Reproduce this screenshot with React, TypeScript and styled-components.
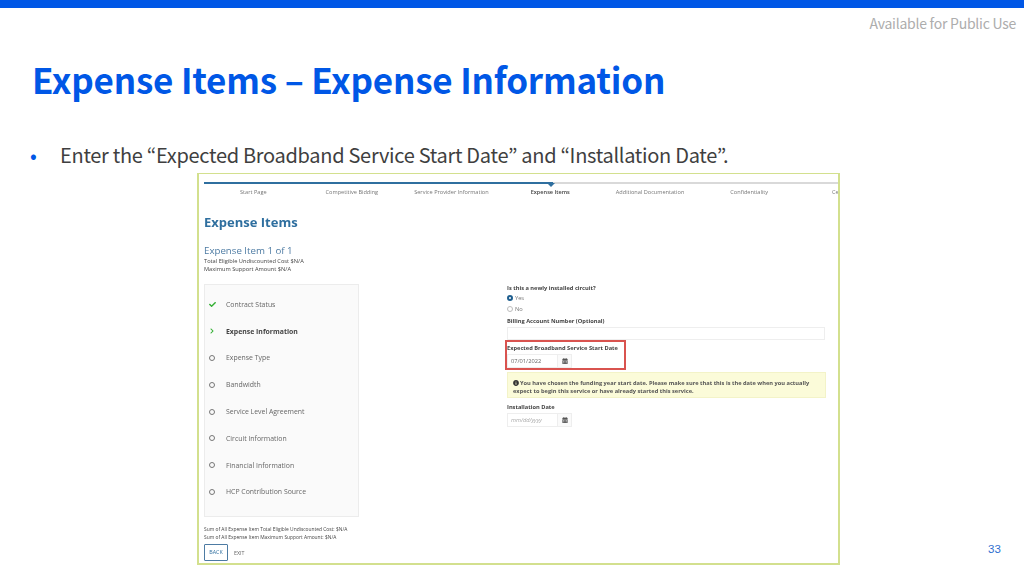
import React from 'react';
import styled, { createGlobalStyle } from 'styled-components';
import { FaCalendarAlt, FaCheck, FaChevronRight, FaInfoCircle } from 'react-icons/fa';

const GlobalStyle = createGlobalStyle`
  html, body { margin: 0; padding: 0; background: #fff; }
  * { box-sizing: border-box; }
`;

const steps = [
  { label: 'Start Page', offset: 36 },
  { label: 'Competitive Bidding', offset: 59 },
  { label: 'Service Provider Information', offset: 36 },
  { label: 'Expense Items', offset: 42, active: true },
  { label: 'Additional Documentation', offset: 46 },
  { label: 'Confidentiality', offset: 46 },
  { label: 'Ce', offset: 64 }
];

const sections = [
  { label: 'Contract Status', state: 'done' },
  { label: 'Expense Information', state: 'current' },
  { label: 'Expense Type', state: 'todo' },
  { label: 'Bandwidth', state: 'todo' },
  { label: 'Service Level Agreement', state: 'todo' },
  { label: 'Circuit Information', state: 'todo' },
  { label: 'Financial Information', state: 'todo' },
  { label: 'HCP Contribution Source', state: 'todo' }
];

function SectionIcon({ state }: { state: string }) {
  if (state === 'done') return <S.Done><FaCheck size={7} /></S.Done>;
  if (state === 'current') return <S.Current><FaChevronRight size={6} /></S.Current>;
  return <S.Todo />;
}

function DateInput({ value, placeholder }: { value?: string; placeholder?: boolean }) {
  return (
    <S.DateRow>
      <S.DateBox $placeholder={placeholder}>{value}</S.DateBox>
      <S.CalendarButton><FaCalendarAlt size={6} /></S.CalendarButton>
    </S.DateRow>
  );
}

export default function App() {
  return (
    <S.Page>
      <GlobalStyle />
      <S.TopBar />
      <S.Tag>Available for Public Use</S.Tag>
      <S.Title>Expense Items – Expense Information</S.Title>
      <S.Bullet>
        <S.Dot>•</S.Dot>
        <span>Enter the “Expected Broadband Service Start Date” and “Installation Date”.</span>
      </S.Bullet>
      <S.Lower>
        <S.Shot>
          <S.ShotInner>
            <S.Track>
              <S.TrackDone />
              <S.Caret />
            </S.Track>
            <S.Steps>
              {steps.map((step) => (
                <S.Step key={step.label} $offset={step.offset} $active={step.active}>{step.label}</S.Step>
              ))}
            </S.Steps>
            <S.Heading>Expense Items</S.Heading>
            <S.ItemTitle>Expense Item 1 of 1</S.ItemTitle>
            <S.Meta>Total Eligible Undiscounted Cost $N/A</S.Meta>
            <S.Meta>Maximum Support Amount $N/A</S.Meta>
            <S.Body>
              <S.SectionList>
                {sections.map((section) => (
                  <S.SectionRow key={section.label}>
                    <S.IconSlot><SectionIcon state={section.state} /></S.IconSlot>
                    <S.SectionLabel $current={section.state === 'current'}>{section.label}</S.SectionLabel>
                  </S.SectionRow>
                ))}
              </S.SectionList>
              <S.Form>
                <S.Label>Is this a newly installed circuit?</S.Label>
                <S.Radios>
                  <S.Radio><S.RadioMark $checked />Yes</S.Radio>
                  <S.Radio><S.RadioMark />No</S.Radio>
                </S.Radios>
                <S.BillingLabel>Billing Account Number (Optional)</S.BillingLabel>
                <S.TextBox />
                <S.Highlighted>
                  <S.Label>Expected Broadband Service Start Date</S.Label>
                  <DateInput value="07/01/2022" />
                  <S.RedBox />
                </S.Highlighted>
                <S.Alert>
                  <S.AlertIcon><FaInfoCircle size={6} /></S.AlertIcon>
                  You have chosen the funding year start date. Please make sure that this is the date when you actually expect to begin this service or have already started this service.
                </S.Alert>
                <S.InstallLabel>Installation Date</S.InstallLabel>
                <DateInput value="mm/dd/yyyy" placeholder />
              </S.Form>
            </S.Body>
            <S.TotalsBlock>
              <S.Totals>Sum of All Expense Item Total Eligible Undiscounted Cost: $N/A</S.Totals>
              <S.Totals>Sum of All Expense Item Maximum Support Amount: $N/A</S.Totals>
            </S.TotalsBlock>
            <S.Actions>
              <S.BackButton>BACK</S.BackButton>
              <S.ExitLink>EXIT</S.ExitLink>
            </S.Actions>
          </S.ShotInner>
        </S.Shot>
        <S.PageNumber>33</S.PageNumber>
      </S.Lower>
    </S.Page>
  );
}

const slideFont = `'Noto Sans CJK JP', 'Noto Sans', sans-serif`;
const shotFont = `'Open Sans', 'Noto Sans', sans-serif`;

const S = {
  Page: styled.div`
    width: 1024px;
    height: 576px;
    overflow: hidden;
    display: flex;
    flex-direction: column;
    background: #fff;
    font-family: ${slideFont};
  `,
  TopBar: styled.div`
    height: 8px;
    background: #0057e6;
  `,
  Tag: styled.div`
    margin-top: 5px;
    padding-right: 8px;
    height: 20px;
    line-height: 20px;
    text-align: right;
    font-size: 14px;
    letter-spacing: -0.25px;
    color: #adadad;
  `,
  Title: styled.h1`
    margin: 24px 0 0;
    padding-left: 32px;
    height: 44px;
    line-height: 44px;
    font-size: 35px;
    letter-spacing: -0.2px;
    font-weight: 700;
    color: #0057e6;
  `,
  Bullet: styled.div`
    margin-top: 40px;
    height: 28px;
    line-height: 28px;
    display: flex;
    font-size: 20px;
    letter-spacing: -0.3px;
    color: #3f3f3f;
  `,
  Dot: styled.span`
    width: 60px;
    padding-left: 30px;
    color: #0057e6;
  `,
  Lower: styled.div`
    margin-top: 4px;
    display: flex;
    align-items: flex-end;
    padding-left: 197px;
  `,
  Shot: styled.div`
    flex: none;
    width: 643px;
    height: 392px;
    border: 2px solid #d3e08e;
    border-top-width: 1px;
    overflow: hidden;
  `,
  ShotInner: styled.div`
    width: 641px;
    padding: 8px 0 0 5px;
    font-family: ${shotFont};
    color: #555;
    filter: blur(0.3px);
  `,
  Track: styled.div`
    position: relative;
    width: 636px;
    height: 2px;
    background: #d9d9d9;
  `,
  TrackDone: styled.div`
    width: 349px;
    height: 2px;
    background: #2f6f9f;
  `,
  Caret: styled.div`
    position: absolute;
    left: 343px;
    top: 1px;
    border-left: 4px solid transparent;
    border-right: 4px solid transparent;
    border-top: 4px solid #2f6f9f;
  `,
  Steps: styled.div`
    margin-top: 4px;
    height: 8px;
    display: flex;
    font-size: 5.6px;
    line-height: 8px;
    white-space: nowrap;
  `,
  Step: styled.div<{ $offset: number; $active?: boolean }>`
    flex: none;
    margin-left: ${({ $offset }) => $offset}px;
    font-weight: ${({ $active }) => ($active ? 600 : 400)};
    color: ${({ $active }) => ($active ? '#444' : '#777')};
  `,
  Heading: styled.h2`
    margin: 17px 0 0;
    height: 18px;
    line-height: 18px;
    font-size: 13px;
    font-weight: 700;
    color: #2f6f9f;
  `,
  ItemTitle: styled.div`
    margin-top: 13px;
    height: 14px;
    line-height: 14px;
    font-size: 9.7px;
    color: #4d7ba3;
  `,
  Meta: styled.div`
    height: 7.5px;
    line-height: 7.5px;
    font-size: 5.7px;
    color: #444;
  `,
  Body: styled.div`
    margin-top: 11px;
    display: flex;
    align-items: flex-start;
    gap: 148px;
  `,
  SectionList: styled.div`
    flex: none;
    width: 155px;
    height: 233px;
    padding-top: 6px;
    background: #fafafa;
    border: 1px solid #ececec;
    display: flex;
    flex-direction: column;
  `,
  SectionRow: styled.div`
    flex: none;
    height: 26.8px;
    display: flex;
    align-items: center;
    font-size: 6.9px;
    color: #666;
  `,
  IconSlot: styled.div`
    flex: none;
    width: 21px;
    padding-left: 4px;
    display: flex;
  `,
  SectionLabel: styled.span<{ $current?: boolean }>`
    font-weight: ${({ $current }) => ($current ? 700 : 400)};
    color: ${({ $current }) => ($current ? '#444' : '#666')};
  `,
  Done: styled.span`
    display: flex;
    color: #35b035;
  `,
  Current: styled.span`
    display: flex;
    color: #35b035;
  `,
  Todo: styled.span`
    width: 6px;
    height: 6px;
    border: 1px solid #777;
    border-radius: 50%;
  `,
  Form: styled.div`
    flex: none;
    width: 319px;
    font-size: 5.7px;
    color: #444;
  `,
  Label: styled.div`
    height: 8px;
    line-height: 8px;
    font-weight: 700;
    color: #444;
  `,
  Radios: styled.div`
    margin-top: 1px;
  `,
  Radio: styled.div`
    height: 10.5px;
    display: flex;
    align-items: center;
    gap: 2px;
    color: #777;
  `,
  RadioMark: styled.span<{ $checked?: boolean }>`
    width: 6px;
    height: 6px;
    border-radius: 50%;
    border: ${({ $checked }) => ($checked ? '2px solid #1f5f8f' : '1px solid #bbb')};
    background: #fff;
  `,
  BillingLabel: styled.div`
    margin-top: 3px;
    height: 8px;
    line-height: 8px;
    font-weight: 700;
    color: #444;
  `,
  TextBox: styled.div`
    margin-top: 2px;
    height: 13px;
    width: 318px;
    border: 1px solid #eee;
  `,
  Highlighted: styled.div`
    position: relative;
    margin-top: 4px;
    width: 119px;
  `,
  RedBox: styled.div`
    position: absolute;
    left: -2px;
    top: -4px;
    width: 121px;
    height: 30px;
    border: 2px solid #d9534f;
  `,
  DateRow: styled.div`
    margin-top: 2px;
    height: 14px;
    display: flex;
  `,
  DateBox: styled.div<{ $placeholder?: boolean }>`
    width: 51px;
    padding-left: 3px;
    line-height: 13px;
    border: 1px solid #eee;
    font-style: ${({ $placeholder }) => ($placeholder ? 'italic' : 'normal')};
    color: ${({ $placeholder }) => ($placeholder ? '#aaa' : '#666')};
  `,
  CalendarButton: styled.div`
    width: 14px;
    display: flex;
    align-items: center;
    justify-content: center;
    border: 1px solid #eee;
    border-left: none;
    background: #fafafa;
    color: #555;
  `,
  Alert: styled.div`
    margin-top: 4px;
    width: 319px;
    height: 26px;
    padding: 7px 5px 0;
    line-height: 7.7px;
    background: #fbfbd9;
    border: 1px solid #f3f3c8;
    font-weight: 700;
    color: #555;
  `,
  AlertIcon: styled.span`
    display: inline-flex;
    vertical-align: -1px;
    margin-right: 1px;
    color: #333;
  `,
  InstallLabel: styled.div`
    margin-top: 5px;
    height: 8px;
    line-height: 8px;
    font-weight: 700;
    color: #444;
  `,
  TotalsBlock: styled.div`
    margin-top: 8px;
  `,
  Totals: styled.div`
    height: 8px;
    line-height: 8px;
    font-size: 4.9px;
    color: #444;
  `,
  Actions: styled.div`
    margin-top: 3px;
    display: flex;
    align-items: center;
    gap: 6px;
    font-size: 5.3px;
  `,
  BackButton: styled.div`
    width: 24px;
    height: 17px;
    line-height: 15px;
    text-align: center;
    border: 1px solid #4d7ba3;
    border-radius: 1px;
    color: #2f6f9f;
  `,
  ExitLink: styled.div`
    color: #666;
  `,
  PageNumber: styled.div`
    margin: 0 0 10px 148px;
    font-family: 'Liberation Sans', sans-serif;
    font-size: 11.5px;
    color: #2f6fd0;
  `
};
